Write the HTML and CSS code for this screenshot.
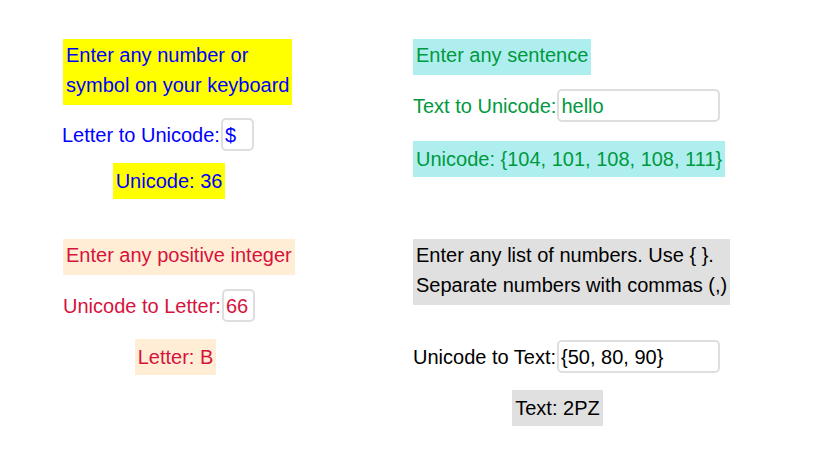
FILE: index.html
```html
<!DOCTYPE html>
<html lang="en">
<head>
    <meta charset="UTF-8">
    <meta name="viewport" content="width=device-width, initial-scale=1.0">
    <title>Unicode Converter</title>
    <link rel="stylesheet" href="styles.css">
</head>
<body>

<main class="grid">
    <section class="cell blue">
        <p class="prompt">Enter any number or<br>symbol on your keyboard</p>
        <div class="row row-a">
            <label for="letterIn">Letter to Unicode:</label>
            <input type="text" id="letterIn" class="small" value="$">
        </div>
        <div class="result-wrap wrap-a">
            <span class="result">Unicode: <span id="letterOut">36</span></span>
        </div>
    </section>

    <section class="cell green">
        <p class="prompt">Enter any sentence</p>
        <div class="row row-b">
            <label for="textIn">Text to Unicode:</label>
            <input type="text" id="textIn" class="wide" value="hello">
        </div>
        <div class="result-wrap wrap-b">
            <span class="result">Unicode: <span id="textOut">{104, 101, 108, 108, 111}</span></span>
        </div>
    </section>

    <section class="cell red">
        <p class="prompt">Enter any positive integer</p>
        <div class="row row-b">
            <label for="codeIn">Unicode to Letter:</label>
            <input type="text" id="codeIn" class="small" value="66">
        </div>
        <div class="result-wrap wrap-c">
            <span class="result">Letter: <span id="codeOut">B</span></span>
        </div>
    </section>

    <section class="cell black">
        <p class="prompt">Enter any list of numbers. Use { }.<br>Separate numbers with commas (,)</p>
        <div class="row row-d">
            <label for="listIn">Unicode to Text:</label>
            <input type="text" id="listIn" class="wide" value="{50, 80, 90}">
        </div>
        <div class="result-wrap wrap-d">
            <span class="result">Text: <span id="listOut">2PZ</span></span>
        </div>
    </section>
</main>

<script>
    // Letra a Unicode
    const letterIn = document.getElementById('letterIn');
    letterIn.addEventListener('input', () => {
        const v = letterIn.value;
        document.getElementById('letterOut').textContent = v ? v.codePointAt(0) : '';
    });

    // Texto a Unicode
    const textIn = document.getElementById('textIn');
    textIn.addEventListener('input', () => {
        const codes = Array.from(textIn.value).map(c => c.codePointAt(0));
        document.getElementById('textOut').textContent = '{' + codes.join(', ') + '}';
    });

    // Unicode a letra
    const codeIn = document.getElementById('codeIn');
    codeIn.addEventListener('input', () => {
        const n = parseInt(codeIn.value, 10);
        document.getElementById('codeOut').textContent = n > 0 ? String.fromCodePoint(n) : '';
    });

    // Unicode a texto
    const listIn = document.getElementById('listIn');
    listIn.addEventListener('input', () => {
        const nums = listIn.value.replace(/[{}]/g, '').split(',')
            .map(s => parseInt(s, 10)).filter(n => n > 0);
        document.getElementById('listOut').textContent = String.fromCodePoint(...nums);
    });
</script>

</body>
</html>
```

FILE: styles.css
```css
body {
    font-family: "Liberation Sans", Arial, sans-serif;
    font-size: 20px;
    margin: 0;
    padding: 0;
    background-color: #fff;
}
.grid {
    display: grid;
    grid-template-columns: 350px 1fr;
    grid-auto-rows: 200px;
    padding: 39px 0 0 63px;
}
.cell {
    display: flex;
    flex-direction: column;
    align-items: flex-start;
}
.prompt {
    margin: 0;
    padding: 1px 3px 5px;
    line-height: 30px;
    white-space: nowrap;
}
.row {
    display: flex;
    align-items: center;
    height: 33px;
}
.row-a { margin-top: 13px; margin-left: -1px; }
.row-b { margin-top: 14px; }
.row-d { margin-top: 35px; }
.row label {
    line-height: 30px;
    white-space: nowrap;
}
.row input {
    font-family: inherit;
    font-size: 20px;
    line-height: 27px;
    color: inherit;
    height: 33px;
    box-sizing: border-box;
    padding: 2px 2px 0;
    margin: 0 0 0 1px;
    border: 2px solid #dedede;
    border-radius: 5px;
    background-color: #fff;
    outline: none;
}
.small { width: 33px; }
.wide { width: 163px; }
.result-wrap {
    text-align: center;
}
.wrap-a { width: 212px; margin-top: 12px; }
.wrap-b { margin-top: 19px; text-align: left; }
.wrap-c { width: 225px; margin-top: 17px; }
.wrap-d { width: 289px; margin-top: 17px; }
.result {
    display: inline-block;
    padding: 3px;
    line-height: 30px;
    white-space: nowrap;
}
.blue { color: #0000ff; }
.blue .prompt, .blue .result { background-color: #ffff00; }
.green { color: #009940; }
.green .prompt, .green .result { background-color: #afeeee; }
.red { color: #d7123c; }
.red .prompt, .red .result { background-color: #ffeed5; }
.black { color: #000; }
.black .prompt, .black .result { background-color: #e0e0e0; }
```
